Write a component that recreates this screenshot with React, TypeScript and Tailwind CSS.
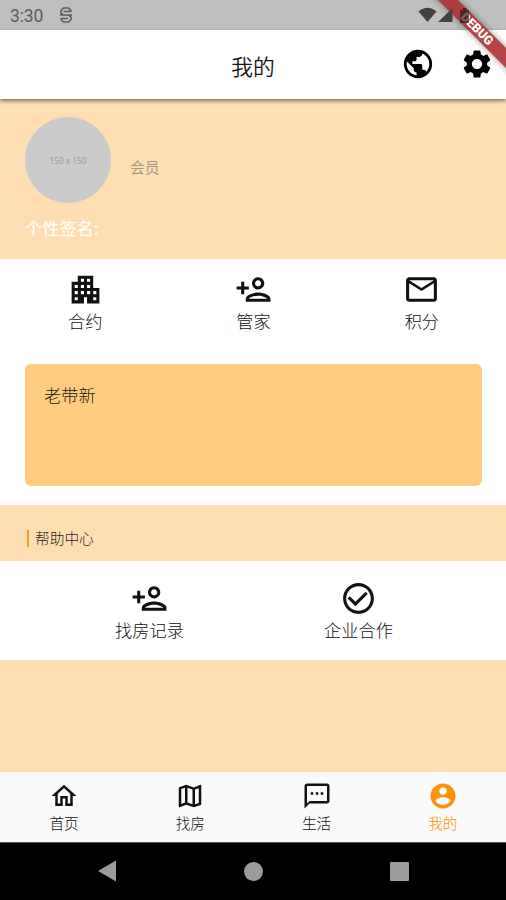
import type { ReactNode } from "react";

const paths = {
  globe:
    "M12 2C6.48 2 2 6.48 2 12s4.48 10 10 10 10-4.48 10-10S17.52 2 12 2zm-1 17.93c-3.95-.49-7-3.85-7-7.93 0-.62.08-1.21.21-1.79L9 15v1c0 1.1.9 2 2 2v1.93zm6.9-2.54c-.26-.81-1-1.39-1.9-1.39h-1v-3c0-.55-.45-1-1-1H8v-2h2c.55 0 1-.45 1-1V7h2c1.1 0 2-.9 2-2v-.41c2.93 1.19 5 4.06 5 7.41 0 2.08-.8 3.97-2.1 5.39z",
  gear: "M19.14 12.94c.04-.3.06-.61.06-.94 0-.32-.02-.64-.07-.94l2.03-1.58c.18-.14.23-.41.12-.61l-1.92-3.32c-.12-.22-.37-.29-.59-.22l-2.39.96c-.5-.38-1.03-.7-1.62-.94l-.36-2.54c-.04-.24-.24-.41-.48-.41h-3.84c-.24 0-.43.17-.47.41l-.36 2.54c-.59.24-1.13.57-1.62.94l-2.39-.96c-.22-.08-.47 0-.59.22L2.74 8.87c-.12.21-.08.47.12.61l2.03 1.58c-.05.3-.09.63-.09.94s.02.64.07.94l-2.03 1.58c-.18.14-.23.41-.12.61l1.92 3.32c.12.22.37.29.59.22l2.39-.96c.5.38 1.03.7 1.62.94l.36 2.54c.05.24.24.41.48.41h3.84c.24 0 .44-.17.47-.41l.36-2.54c.59-.24 1.13-.56 1.62-.94l2.39.96c.22.08.47 0 .59-.22l1.92-3.32c.12-.22.07-.47-.12-.61l-2.01-1.58zM12 15.6c-1.98 0-3.6-1.62-3.6-3.6s1.62-3.6 3.6-3.6 3.6 1.62 3.6 3.6-1.62 3.6-3.6 3.6z",
  apartment:
    "M17 11V3H7v4H3v14h8v-4h2v4h8V11h-4zM7 19H5v-2h2v2zm0-4H5v-2h2v2zm0-4H5V9h2v2zm4 4H9v-2h2v2zm0-4H9V9h2v2zm0-4H9V5h2v2zm4 8h-2v-2h2v2zm0-4h-2V9h2v2zm0-4h-2V5h2v2zm4 12h-2v-2h2v2zm0-4h-2v-2h2v2z",
  personAdd:
    "M15 12c2.21 0 4-1.79 4-4s-1.79-4-4-4-4 1.79-4 4 1.79 4 4 4zm0-6c1.1 0 2 .9 2 2s-.9 2-2 2-2-.9-2-2 .9-2 2-2zm0 8c-2.67 0-8 1.34-8 4v2h16v-2c0-2.66-5.33-4-8-4zm-6 4c.22-.72 3.31-2 6-2 2.7 0 5.8 1.29 6 2H9zm-3-3v-3h3v-2H6V7H4v3H1v2h3v3h2z",
  mail: "M20 4H4c-1.1 0-1.99.9-1.99 2L2 18c0 1.1.9 2 2 2h16c1.1 0 2-.9 2-2V6c0-1.1-.9-2-2-2zm0 14H4V8l8 5 8-5v10zm-8-7L4 6h16l-8 5z",
  check:
    "M16.59 7.58L10 14.17l-3.59-3.58L5 12l5 5 8-8-1.41-1.42zM12 2C6.48 2 2 6.48 2 12s4.48 10 10 10 10-4.48 10-10S17.52 2 12 2zm0 18c-4.42 0-8-3.58-8-8s3.58-8 8-8 8 3.58 8 8-3.58 8-8 8z",
  home: "M12 5.69l5 4.5V18h-2v-6H9v6H7v-7.81l5-4.5M12 3L2 12h3v8h6v-6h2v6h6v-8h3L12 3z",
  map: "M20.5 3l-.16.03L15 5.1 9 3 3.36 4.9c-.21.07-.36.25-.36.48V20.5c0 .28.22.5.5.5l.16-.03L9 18.9l6 2.1 5.64-1.9c.21-.07.36-.25.36-.48V3.5c0-.28-.22-.5-.5-.5zM10 5.47l4 1.4v11.66l-4-1.4V5.47zm-5 .99l3-1.01v11.7l-3 1.16V6.46zm14 11.08l-3 1.01V6.86l3-1.16v11.84z",
  sms: "M20 2H4c-1.1 0-2 .9-2 2v18l4-4h14c1.1 0 2-.9 2-2V4c0-1.1-.9-2-2-2zm0 14H6l-2 2V4h16v12zM7 9h2v2H7zm4 0h2v2h-2zm4 0h2v2h-2z",
  account:
    "M12 2C6.48 2 2 6.48 2 12s4.48 10 10 10 10-4.48 10-10S17.52 2 12 2zm0 3c1.66 0 3 1.34 3 3s-1.34 3-3 3-3-1.34-3-3 1.34-3 3-3zm0 14.2c-2.5 0-4.71-1.28-6-3.22.03-1.99 4-3.08 6-3.08 1.99 0 5.97 1.09 6 3.08-1.29 1.94-3.5 3.22-6 3.22z",
};

function Icon({ name, className }: { name: keyof typeof paths; className: string }) {
  return (
    <svg viewBox="0 0 24 24" fill="currentColor" className={`shrink-0 ${className}`}>
      <path d={paths[name]} />
    </svg>
  );
}

function Shortcut({ icon, children }: { icon: keyof typeof paths; children: ReactNode }) {
  return (
    <div className="flex flex-col items-center text-[#111]">
      <Icon name={icon} className="size-[37px]" />
      <span className="mt-[1px] text-[17.2px] font-light leading-6">{children}</span>
    </div>
  );
}

function Tab({ icon, active, children }: { icon: keyof typeof paths; active?: boolean; children: ReactNode }) {
  return (
    <div className={`flex flex-1 flex-col items-center pt-[9px] ${active ? "text-[#ff9109]" : "text-[#111]"}`}>
      <Icon name={icon} className="size-[30px]" />
      <span className="mt-0.5 text-[14.7px] font-light leading-5">{children}</span>
    </div>
  );
}

export default function App() {
  return (
    <div className="relative flex h-[900px] w-[506px] flex-col overflow-hidden bg-[#ffdfb2] font-['Noto_Sans_CJK_SC',sans-serif]">
      <div className="flex h-[30px] shrink-0 items-center bg-[#bfbfbf] pl-[10px] text-[#5c5c5c]">
        <span className="font-[Roboto,sans-serif] text-[17.5px] leading-[30px] tracking-[-0.1px] pt-[2px]">3:30</span>
        <svg viewBox="0 0 14 18" className="ml-[16px] h-[18px] w-[14px]" fill="none" stroke="currentColor" strokeWidth="1.6">
          <path d="M12 5.5V4.500L9.500 2h-5L2 4.500V7l2.500 2h5L12 11.200v2.300L9.500 16h-5L2 13.500v-1M4.500 5.500H12M1 9h12M2 12.500h7" />
        </svg>
        <svg viewBox="0 0 60 20" className="relative z-10 ml-auto mr-[28px] h-5 w-[60px] text-[#424242]" fill="currentColor">
          <path d="M.5 6.500Q9.500-1 18.500 6.500L9.500 17zM20 17 34.500 3v14z" />
          <path d="M42 5h2.500V3h4v2H51v13h-9z" fill="#281212" fillOpacity=".65" />
        </svg>
      </div>
      <header className="relative grid h-[69px] shrink-0 grid-cols-[1fr_auto_1fr] items-center bg-white shadow-[0_2px_4px_rgba(0,0,0,0.5)]">
        <span />
        <h1 className="pt-[2px] text-[21.8px] font-[350] leading-8 text-[#151515]">我的</h1>
        <div className="flex justify-end gap-[25px] pb-[1px] pr-3 text-black">
          <Icon name="globe" className="size-[34px]" />
          <Icon name="gear" className="size-[34px]" />
        </div>
      </header>
      <section className="h-[160px] shrink-0 px-[25px] pt-[18px]">
        <div className="flex">
          <div className="flex size-[86px] items-center justify-center rounded-full bg-[#cbcbcb]">
            <span className="pt-[2px] font-['Open_Sans',sans-serif] text-[8.3px] text-[#999]">150 x 150</span>
          </div>
          <span className="ml-[19px] mt-[40px] text-[14.7px] font-[350] leading-5 text-[#a49785]">会员</span>
        </div>
        <p className="mt-[13px] text-[17.2px] font-normal leading-6 text-white">个性签名:</p>
      </section>
      <section className="h-[246px] shrink-0 bg-white pt-[12px]">
        <div className="grid grid-cols-3 pl-[1px]">
          <Shortcut icon="apartment">合约</Shortcut>
          <Shortcut icon="personAdd">管家</Shortcut>
          <Shortcut icon="mail">积分</Shortcut>
        </div>
        <div className="ml-[25px] mr-[24px] mt-[31px] h-[122px] rounded-[6px] bg-[#ffcc80] px-[19px] pt-[19px] text-[17.2px] font-light leading-6 text-[#1c160d]">
          老带新
        </div>
      </section>
      <div className="flex h-[56px] shrink-0 items-center pl-[27px] pt-[10px]">
        <span className="mt-[1px] h-[17px] w-[2px] bg-[#ff9f13]" />
        <h2 className="ml-[6px] text-[14.7px] font-light leading-5 text-[#2c241a]">帮助中心</h2>
      </div>
      <section className="grid h-[99px] shrink-0 grid-cols-2 bg-white pl-[45px] pr-[43px] pt-[19px]">
        <Shortcut icon="personAdd">找房记录</Shortcut>
        <Shortcut icon="check">企业合作</Shortcut>
      </section>
      <nav className="mt-auto flex h-[70px] shrink-0 bg-[#fafafa] pl-[1px]">
        <Tab icon="home">首页</Tab>
        <Tab icon="map">找房</Tab>
        <Tab icon="sms">生活</Tab>
        <Tab icon="account" active>我的</Tab>
      </nav>
      <div className="flex h-[58px] shrink-0 items-center justify-center gap-[127px] border-t border-[#555] bg-black pb-[1px] pl-[2px] text-[#9b9b9b]">
        <svg viewBox="0 0 18 22" className="-ml-[2px] mr-[1px] h-[22px] w-[18px]" fill="currentColor">
          <path d="M0 11 18 .5v21z" />
        </svg>
        <span className="size-[19px] rounded-full bg-current" />
        <span className="size-[19px] rounded-[1px] bg-current" />
      </div>
      <div className="absolute left-[407px] top-[22px] flex h-[14px] w-[140px] rotate-45 items-center justify-center bg-[#ab2525]/85 font-[Roboto,sans-serif] text-[12.5px] font-black leading-none text-white shadow-[0_0_7px_rgba(0,0,0,0.4)]">
        DEBUG
      </div>
    </div>
  );
}
